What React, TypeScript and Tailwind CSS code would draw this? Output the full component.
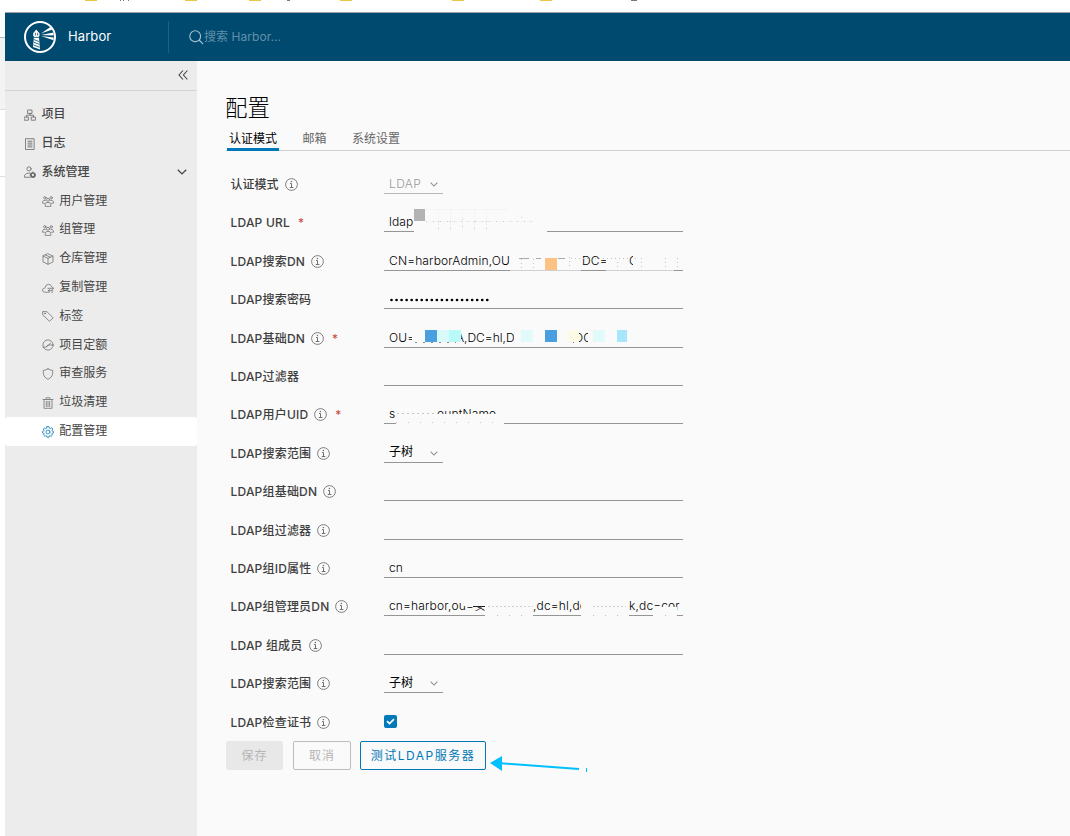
import React from 'react';
import type { ReactNode } from 'react';

const FONT = "font-['Inter','Noto_Sans_CJK_SC',sans-serif]";

function Glyph({ children, className = 'size-3', box = '0 0 12 12' }: { children: ReactNode; className?: string; box?: string }) {
  return (
    <svg viewBox={box} className={`${className} shrink-0`} fill="none" stroke="currentColor" strokeWidth="0.8" strokeLinejoin="round" strokeLinecap="round">
      {children}
    </svg>
  );
}

const users = (
  <>
    <circle cx="6" cy="4.8" r="1.5" />
    <path d="M3.2 11V9.3Q3.2 7.4 6 7.4T8.8 9.3V11Z" />
    <circle cx="2.8" cy="2.8" r="1.2" />
    <circle cx="9.2" cy="2.8" r="1.2" />
    <path d="M.6 7.9V6.6Q.8 5.2 3.3 5.3M11.4 7.9V6.6Q11.2 5.2 8.7 5.3M1 8.2H2.4M9.6 8.2H11" />
  </>
);

const icons: Record<string, ReactNode> = {
  project: (
    <>
      <rect x="4" y="1" width="4" height="3.4" />
      <rect x=".6" y="8" width="3.8" height="3.2" />
      <rect x="7.6" y="8" width="3.8" height="3.2" />
      <path d="M6 4.4V6.2M2.5 8V6.2H9.5V8" />
    </>
  ),
  log: (
    <>
      <rect x="1.9" y=".7" width="8.2" height="10.8" />
      <path d="M4 3.2H8M4 5.1H8M4 7H8M4 8.9H8" strokeWidth="0.9" />
    </>
  ),
  admin: (
    <>
      <circle cx="5" cy="2.9" r="2.1" />
      <path d="M6 11.3H.6V9.2Q1.7 6.6 6.2 7" />
      <circle cx="8.9" cy="9" r="2" strokeWidth="1.7" />
      <path d="M8.9 5.9V6.5M8.9 11.5V12M5.9 9H6.4M11.4 9H12" />
    </>
  ),
  users,
  box: <path d="M6 .8L11 3.1V8.9L6 11.3L1 8.9V3.1ZM1 3.1L6 5.4L11 3.1M6 5.4V11.3M3.4 2L8.5 4.3" />,
  cloud: (
    <path d="M7.2 10.2H2.4Q.4 9.8.5 7.9Q.8 6 2.9 6.1Q3.4 2.3 6.6 2.3Q8.9 2.4 9.5 4.3M9.7 10.2H10.8M5.9 6.3H11.4M9.9 4.9L11.5 6.3L9.9 7.7M10.7 8.6H6.4M7.6 7.4L6.3 8.6L7.6 9.8" />
  ),
  tag: (
    <>
      <path d="M1 1.6H4.8L11.2 7.8L7.5 11.3L1 5.2Z" />
      <circle cx="3" cy="3.4" r=".5" />
    </>
  ),
  quota: (
    <>
      <circle cx="6" cy="6" r="5.1" />
      <path d="M1 8.1H4.2Q4.8 6 6.8 6H11M5.2 7.3L8.6 4.2" />
    </>
  ),
  shield: <path d="M6 .8Q8.3 2.3 10.7 2.4V5.9Q10.4 9.3 6 11.4Q1.6 9.3 1.3 5.9V2.4Q3.7 2.3 6 .8Z" />,
  trash: <path d="M1 2.5H11M4 2.3V.8H8V2.3M2 2.6V11.3H10V2.6M4.3 4.3V9.6M6 4.3V9.6M7.7 4.3V9.6" />,
  cog: (
    <>
      <path d="M5 .6H7L7.4 2.1L8.4 2.5L9.7 1.8L10.8 3L10 4.3L10.4 5.1L11.5 5.5V6.9L10.2 7.2L9.8 8.1L10.4 9.2L9.2 10.3L8.1 9.7L7.2 10L6.8 11.4H5.2L4.8 10L3.9 9.7L2.8 10.3L1.6 9.2L2.2 8.1L1.8 7.2L.5 6.9V5.5L1.7 5.1L2.1 4.3L1.4 3L2.5 1.8L3.7 2.5L4.6 2.1Z" strokeWidth="1" />
      <circle cx="6" cy="6" r="2" strokeWidth="1" />
    </>
  ),
};

const topItems = [
  { icon: 'project', label: '项目' },
  { icon: 'log', label: '日志' },
  { icon: 'admin', label: '系统管理', open: true },
];

const subItems = [
  { icon: 'users', label: '用户管理' },
  { icon: 'users', label: '组管理' },
  { icon: 'box', label: '仓库管理' },
  { icon: 'cloud', label: '复制管理' },
  { icon: 'tag', label: '标签' },
  { icon: 'quota', label: '项目定额' },
  { icon: 'shield', label: '审查服务' },
  { icon: 'trash', label: '垃圾清理' },
  { icon: 'cog', label: '配置管理', active: true },
];

function Chevron({ className }: { className: string }) {
  return (
    <svg viewBox="0 0 10 6" className={className} fill="none" stroke="currentColor" strokeWidth="1.3">
      <path d="M.8 .8L5 4.9L9.2 .8" />
    </svg>
  );
}

function Info() {
  return (
    <svg viewBox="0 0 13 13" className="size-[13px] shrink-0 text-[#717171]" fill="none" stroke="currentColor">
      <circle cx="6.5" cy="6.5" r="5.9" strokeWidth=".9" />
      <path d="M5 5.5H6.5V9.5M4.8 9.5H8.4" strokeWidth="1" />
      <circle cx="6.4" cy="3.5" r=".8" fill="currentColor" stroke="none" />
    </svg>
  );
}

function Mosaic({ children }: { children: ReactNode }) {
  return (
    <svg viewBox="0 0 299 28" className="absolute -bottom-px left-0 h-7 w-[299px]" shapeRendering="crispEdges">
      {children}
    </svg>
  );
}

function Blank({ x, y = 0, w, h = 28 }: { x: number; y?: number; w: number; h?: number }) {
  return <rect x={x} y={y} width={w} height={h} fill="#fafafa" />;
}

function Row({ label, info, required, children }: { label: string; info?: boolean; required?: boolean; children: ReactNode }) {
  return (
    <div className="flex h-[38.4px] items-end">
      <div className="flex h-[18px] w-[158px] shrink-0 items-center pl-[4.5px] text-[12px] font-medium leading-5 tracking-[0.2px] text-[#3f3f3f]">
        <span className={`whitespace-nowrap ${label === '认证模式' ? 'tracking-normal' : ''}`}>{label}</span>
        {info && <span className="mb-px ml-[6px] flex"><Info /></span>}
        {required && <span className="ml-2 font-normal text-[#c8473a]">*</span>}
      </div>
      {children}
    </div>
  );
}

function Field({ children }: { children?: ReactNode }) {
  return (
    <div className="relative h-6 w-[299px] whitespace-nowrap border-b border-[#959595] pl-[5px] text-[12px] font-light leading-[28px] tracking-[0.15px] text-black">
      {children}
    </div>
  );
}

function Select({ value, disabled }: { value: string; disabled?: boolean }) {
  return (
    <div className={`flex h-6 w-[59px] items-center justify-between border-b pl-[5px] pr-[5px] text-[12px] ${disabled ? 'border-[#b8b8b8] text-[#9b9b9b]' : 'border-[#959595] text-black'}`}>
      <span className={`pt-1 ${disabled ? 'font-light tracking-[0.4px]' : ''}`}>{value}</span>
      <Chevron className="mt-1.5 h-[5px] w-2 text-[#8c8c8c]" />
    </div>
  );
}

function Logo() {
  return (
    <svg viewBox="0 0 32 32" className="size-8 shrink-0">
      <circle cx="16" cy="16" r="15" fill="none" stroke="#fff" strokeWidth="2" />
      <path d="M9.2 12.2L12.2 8.5L15.5 12.2V15.2H14.9L16 28.5L9 26L10 15.2H9.2Z" fill="#fff" />
      <path d="M11.4 11.8V14.4M13.6 11.8V14.4M9.8 16.4H15.2M10 18.6L15 20.6M9.8 21.2L15.3 23.4M9.6 24L15.5 26.2" stroke="#004a70" strokeWidth=".8" />
      <path d="M17 12.6L26.4 6L28.4 8.4ZM17 13.9L29.5 11.5V14.4ZM17 15L29.6 16.4V19.2Z" fill="#fff" />
    </svg>
  );
}

export default function App() {
  return (
    <div className={`${FONT} relative flex h-[836px] w-[1070px] flex-col overflow-hidden bg-white`}>
      <div className="h-3 shrink-0 overflow-hidden">
        <svg viewBox="0 0 1070 12" className="h-3 w-[1070px]" shapeRendering="crispEdges">
          <path d="M85 .5H97M185 .5H197M249 .5H261M340 .5H352M452 .5H464M540 .5H552" stroke="#ecc544" />
          <path d="M120 .5H121M123 .5H124M128 .5H129M287 .5H290M631 .5H637" stroke="#77777f" />
        </svg>
      </div>
      <div className="flex min-h-0 flex-1">
        <div className="flex w-[5px] shrink-0 flex-col">
          <div className="h-[26px] border-b border-[#b8b8b8]" />
          <div className="h-[72px] border-b border-[#dedede] bg-[#f3f3f3]" />
          <div className="h-[67px] border-b border-[#dedede]" />
        </div>
        <div className="flex min-w-0 flex-1 flex-col border-t border-[#a4a4a4]">
          <header className="flex h-12 shrink-0 items-center bg-[#004a70]">
            <div className="flex h-8 w-[164px] items-center border-r border-[#1d6183] pl-[19px]">
              <Logo />
              <span className="ml-3 text-[13px] tracking-[0.1px] text-white">Harbor</span>
            </div>
            <div className="flex items-center pl-5 text-[#6290a9]">
              <svg viewBox="0 0 15 15" className="size-[15px] text-[#a9c3d0]" fill="none" stroke="currentColor" strokeWidth="1.1">
                <circle cx="6.2" cy="6.2" r="5.4" />
                <path d="M10 10L14.2 14.2" />
              </svg>
              <span className="text-[12px] tracking-[0.05px]">搜索 Harbor...</span>
            </div>
          </header>
          <div className="flex min-h-0 flex-1">
            <aside className="w-48 shrink-0 bg-[#ececec] text-[#454545]">
              <div className="flex h-[30px] items-center justify-end border-b border-[#d5d5d5] pb-0.5 pr-[9.5px]">
                <svg viewBox="0 0 10 10" className="size-[10px]" fill="none" stroke="currentColor" strokeWidth="1.1">
                  <path d="M5 .5L1 5L5 9.5M9.4 .5L5.4 5L9.4 9.5" />
                </svg>
              </div>
              <nav className="pt-[9.4px] text-[12px]">
                {topItems.map((item) => (
                  <div key={item.label} className="flex h-[28.8px] items-center pb-px pl-[19.4px] font-medium">
                    <Glyph className="mt-px size-3 text-[#666]">{icons[item.icon]}</Glyph>
                    <span className="ml-[5.1px] flex-1">{item.label}</span>
                    {item.open && <Chevron className="mr-[10px] h-[6px] w-[10px]" />}
                  </div>
                ))}
                {subItems.map((item) => (
                  <div key={item.label} className={`flex h-[28.8px] items-center rounded-[3px] pb-px pl-[37.4px] ${item.active ? 'bg-white' : ''}`}>
                    <Glyph className={`mt-px size-3 ${item.active ? 'text-[#3592c4]' : 'text-[#737373]'}`}>{icons[item.icon]}</Glyph>
                    <span className="ml-[4.8px]">{item.label}</span>
                  </div>
                ))}
              </nav>
            </aside>
            <main className="min-w-0 flex-1 bg-[#fafafa] pl-[29px]">
              <h1 className="-ml-px h-16 pt-[31px] text-[22.4px] font-light leading-8 text-black">配置</h1>
              <div className="flex h-[26px] gap-[21.5px] border-b border-[#cfcfcf] text-[12px] leading-[27px] text-[#666]">
                <div className="ml-px h-[26px] border-b-[3px] border-[#0079b8] px-0.5 text-black">认证模式</div>
                <div className="px-0.5">邮箱</div>
                <div className="px-0.5">系统设置</div>
              </div>
              <div className="pt-[4.7px]">
                <Row label="认证模式" info><Select value="LDAP" disabled /></Row>
                <Row label="LDAP URL" required>
                  <Field>
                    ldap
                    <Mosaic>
                      <Blank x={30} w={133} />
                      <rect x="30" y="5" width="11" height="12" fill="#b3b3b3" />
                      <path d="M42 17.5H149M54.5 5V28M66.5 5V28M78.5 5V28M90.5 5V28M102.5 5V28M42 5.5H125" stroke="#f4f4f4" fill="none" />
                      <path d="M42 17.5H150M54.5 17V28M66.5 17V28M78.5 15V28M90.5 17V28M102.5 17V28M137.5 13V15" stroke="#cfcfcf" strokeDasharray="1 6" fill="none" />
                    </Mosaic>
                  </Field>
                </Row>
                <Row label="LDAP搜索DN" info>
                  <Field>
                    <span className="inline-block w-[193px]">CN=harborAdmin,OU</span>
                    <span className="inline-block w-[47px]">DC=</span>
                    <span>C</span>
                    <Mosaic>
                      <Blank x={126} w={71} h={27} />
                      <Blank x={222} w={21} h={27} />
                      <Blank x={249} w={50} h={27} />
                      <path d="M126 27.5H197M222 27.5H290" stroke="#d0d0d0" />
                      <path d="M135 15.5H145M152 15.5H157M174 15.5H181" stroke="#aaa" />
                      <path d="M137.5 16V28M149.5 16V28M185.5 14V24M257.5 15V24M281.5 15V24M293.5 15V26M187 15.5H252M233.5 19V24" stroke="#c2c2c2" strokeDasharray="1 3" />
                      <rect x="161" y="15" width="12" height="12" fill="#fbc283" />
                    </Mosaic>
                  </Field>
                </Row>
                <Row label="LDAP搜索密码">
                  <Field>
                    <svg viewBox="0 0 102 4" className="mt-[13px] h-1 w-[102px]" stroke="#000" strokeWidth="2.7" strokeLinecap="round">
                      <path d="M2.5 2H100" strokeDasharray="0.01 5.03" />
                    </svg>
                  </Field>
                </Row>
                <Row label="LDAP基础DN" info required>
                  <Field>
                    <span className="inline-block w-[67px]">OU=</span>
                    <span className="inline-block w-[118px] tracking-normal">A,DC=hl,D</span>
                    <span>OC</span>
                    <Mosaic>
                      <Blank x={28} w={45} h={27} />
                      <Blank x={73} w={4} h={22} />
                      <Blank x={130} w={64} h={27} />
                      <Blank x={204} w={50} h={27} />
                      <path d="M31 22.5H72" stroke="#888" strokeDasharray="2 6" />
                      <rect x="41" y="10" width="12" height="12" fill="#4a9fe0" />
                      <rect x="53" y="10" width="12" height="12" fill="#d8faf9" />
                      <rect x="65" y="10" width="12" height="12" fill="#b9f9f8" />
                      <rect x="137" y="10" width="12" height="12" fill="#e1fafa" />
                      <rect x="161" y="10" width="12" height="12" fill="#4a9fe0" />
                      <rect x="185" y="10" width="10" height="12" fill="#fafbe2" />
                      <rect x="209" y="10" width="12" height="12" fill="#e1fafa" />
                      <rect x="233" y="10" width="10" height="12" fill="#a8e6fb" />
                      <path d="M189 22.5H190" stroke="#777" />
                    </Mosaic>
                  </Field>
                </Row>
                <Row label="LDAP过滤器"><Field /></Row>
                <Row label="LDAP用户UID" info required>
                  <Field>
                    <span className="inline-block w-[48px]">s</span>
                    <span>ountName</span>
                    <Mosaic>
                      <Blank x={12} y={18} w={108} h={10} />
                      <path d="M13 17.5H50" stroke="#c6c6c6" strokeDasharray="2 3" />
                      <path d="M12 26.5H120" stroke="#ccc" strokeDasharray="1 11" />
                    </Mosaic>
                  </Field>
                </Row>
                <Row label="LDAP搜索范围" info><Select value="子树" /></Row>
                <Row label="LDAP组基础DN" info><Field /></Row>
                <Row label="LDAP组过滤器" info><Field /></Row>
                <Row label="LDAP组ID属性" info><Field>cn</Field></Row>
                <Row label="LDAP组管理员DN" info>
                  <Field>
                    <span className="inline-block w-[144px]">cn=harbor,ou=安</span>
                    <span className="inline-block w-[96px]">,dc=hl,dc</span>
                    <span>k,dc=cor</span>
                    <Mosaic>
                      <Blank x={77} y={8} w={24} h={10} />
                      <Blank x={101} w={48} />
                      <Blank x={197} w={48} />
                      <Blank x={269} y={19} w={24} h={9} />
                      <path d="M89 18.5H101" stroke="#222" />
                      <path d="M104 18.5H149M209 18.5H242" stroke="#cfcfcf" strokeDasharray="2 2" />
                      <path d="M113 27.5H145M209 27.5H245M281 27.5H282" stroke="#bcbcbc" strokeDasharray="1 11" />
                    </Mosaic>
                  </Field>
                </Row>
                <Row label="LDAP 组成员" info><Field /></Row>
                <Row label="LDAP搜索范围" info><Select value="子树" /></Row>
                <Row label="LDAP检查证书" info>
                  <div className="mb-[3.3px] flex size-[13px] items-center justify-center rounded-[2px] bg-[#0079b8]">
                    <svg viewBox="0 0 9 7" className="h-[7px] w-[9px]" fill="none" stroke="#fff" strokeWidth="1.7">
                      <path d="M1 3.2L3.5 5.6L8 1.1" />
                    </svg>
                  </div>
                </Row>
              </div>
              <div className="flex gap-[9px] pt-[9.3px] text-[12px] tracking-[1px]">
                <button className="h-[29px] w-[57px] rounded-[2px] bg-[#e8e8e8] pt-px text-[#b5b5b5]">保存</button>
                <button className="ml-px h-[29px] w-[58px] rounded-[2px] border border-[#bdbdbd] pt-px text-[#b5b5b5]">取消</button>
                <button className="h-[29px] w-[126px] whitespace-nowrap rounded-[2px] border border-[#0079b8] pt-px tracking-[1.5px] text-[#0079b8]">测试LDAP服务器</button>
              </div>
            </main>
          </div>
        </div>
      </div>
      <svg viewBox="0 0 100 20" className="absolute left-[489px] top-[754px] h-5 w-[100px]">
        <path d="M1 9L13 2V17Z" fill="#00bfff" />
        <path d="M12 9.3L90 15" stroke="#00bfff" strokeWidth="1.9" />
        <path d="M97.5 14V18" stroke="#00bfff" />
      </svg>
    </div>
  );
}
